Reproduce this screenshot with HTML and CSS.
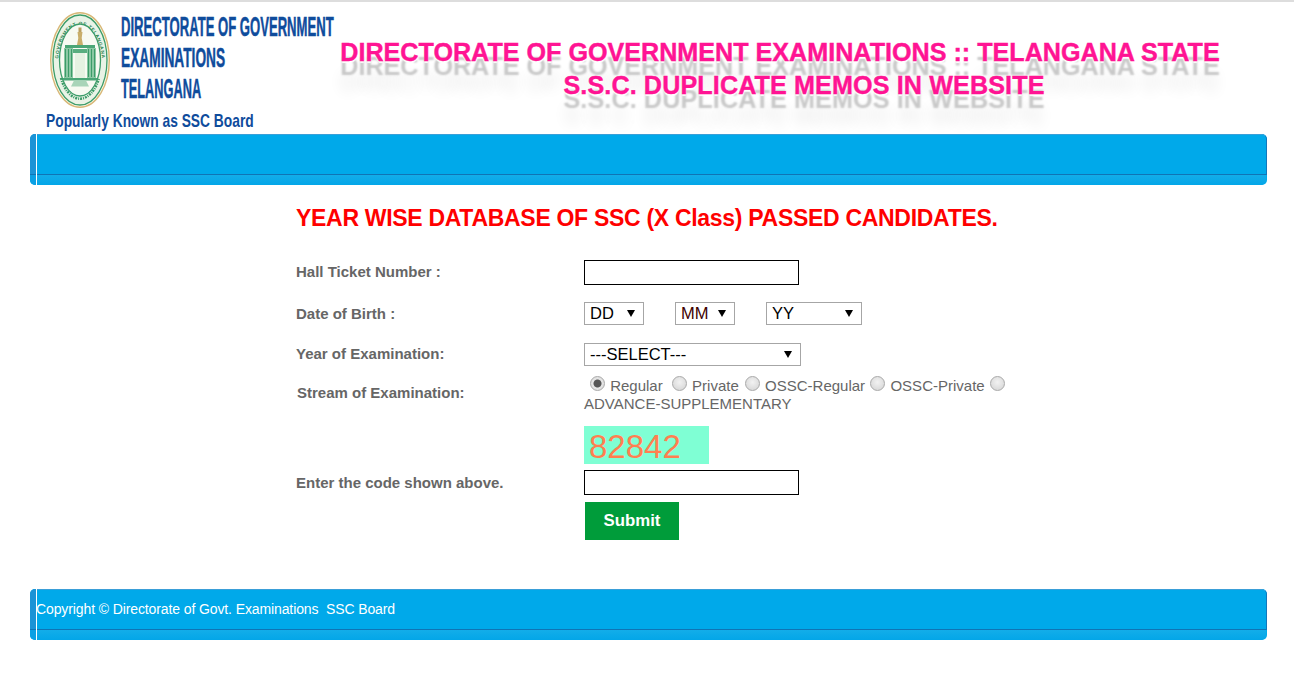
FILE: index.html
```html
<!DOCTYPE html>
<html lang="en">
<head>
<meta charset="utf-8">
<title>S.S.C. Duplicate Memos</title>
<link rel="stylesheet" href="styles.css">
</head>
<body>
<header class="header">
  <div class="logo">
    <div class="logo-top">
      <svg class="seal" viewBox="0 0 60 96" width="60" height="96" aria-hidden="true">
        <defs>
          <path id="sealArc" d="M8 52 A22 39 0 0 1 52 52"/>
        </defs>
        <ellipse cx="30" cy="48" rx="29.300" ry="47.300" fill="#fbf8ea" stroke="#d8b878" stroke-width="1.400"/>
        <ellipse cx="30" cy="48" rx="27" ry="45" fill="#e9f3e6" stroke="#3c9c69" stroke-width="1.300"/>
        <text class="seal-text" text-anchor="middle"><textPath href="#sealArc" startOffset="50%">GOVERNMENT OF TELANGANA</textPath></text>
        <path class="seal-script" d="M11 66 A21 36 0 0 0 49 66"/>
        <ellipse cx="30" cy="48" rx="20.500" ry="36" fill="#f7faf2" stroke="#3c9c69" stroke-width="1.300"/>
        <path d="M27.500 20h5l-.8 6 1.300 7h-6l1.300-7z" fill="#c9ae6a"/>
        <path d="M28.500 15.500h3v4.500h-3z" fill="#b89f60"/>
        <path d="M15 33h30v3H15z" fill="#4aa676"/>
        <path d="M14 36h9v30h-9zM37 36h9v30h-9z" fill="#8cc8a4"/>
        <path d="M15.500 37v28M18.500 37v28M21.500 37v28M38.500 37v28M41.500 37v28M44.500 37v28" stroke="#3c9c69" stroke-width="1"/>
        <path d="M23 37h14v4H23z" fill="#5aae80"/>
        <path d="M25 41h10v25H25z" fill="#e6f2e2"/>
        <path d="M13 66h34v2.500H13z" fill="#4aa676"/>
        <path d="M24 68.500h12l3 6H21z" fill="#a8d4b8"/>
      </svg>
      <div class="logo-lines">
        <div class="logo-line line-one">DIRECTORATE OF GOVERNMENT</div>
        <div class="logo-line line-two">EXAMINATIONS</div>
        <div class="logo-line line-three">TELANGANA</div>
      </div>
    </div>
    <div class="logo-sub">Popularly Known as SSC Board</div>
  </div>
  <h1 class="title">DIRECTORATE OF GOVERNMENT EXAMINATIONS :: TELANGANA STATE<br><span class="title-second">S.S.C. DUPLICATE MEMOS IN WEBSITE</span></h1>
</header>

<div class="bar">
  <div class="bar-cap"></div>
  <div class="bar-body">
    <div class="bar-main"></div>
    <div class="bar-strip"></div>
  </div>
</div>

<main class="content">
  <h2 class="heading">YEAR WISE DATABASE OF SSC (X Class) PASSED CANDIDATES.</h2>
  <form class="form">
    <div class="row row-hall">
      <label class="label">Hall Ticket Number :</label>
      <input class="field" type="text">
    </div>
    <div class="row row-dob">
      <span class="label">Date of Birth :</span>
      <div class="dob">
        <span class="pick pick-dd"><select><option>DD</option></select></span>
        <span class="pick pick-dd"><select class="dark"><option>MM</option></select></span>
        <span class="pick pick-yy"><select><option>YY</option></select></span>
      </div>
    </div>
    <div class="row row-year">
      <label class="label">Year of Examination:</label>
      <span class="pick pick-year"><select><option>---SELECT---</option></select></span>
    </div>
    <div class="row row-stream">
      <span class="label label-stream">Stream of Examination:</span>
      <div class="radios">
        <input type="radio" name="stream" class="first" checked> Regular
        <input type="radio" name="stream" class="second"> Private
        <input type="radio" name="stream" class="third"> OSSC-Regular
        <input type="radio" name="stream"> OSSC-Private
        <input type="radio" name="stream"> ADVANCE-SUPPLEMENTARY
      </div>
    </div>
    <div class="row row-captcha">
      <span></span>
      <div class="captcha">82842</div>
    </div>
    <div class="row row-code">
      <label class="label">Enter the code shown above.</label>
      <input class="field" type="text">
    </div>
    <div class="row row-submit">
      <span></span>
      <button class="submit" type="button">Submit</button>
    </div>
  </form>
</main>

<footer class="bar bar-footer">
  <div class="bar-cap"></div>
  <div class="bar-body">
    <div class="bar-main"><span class="copyright">Copyright © Directorate of Govt. Examinations&nbsp; SSC Board</span></div>
    <div class="bar-strip"></div>
  </div>
</footer>
</body>
</html>
```
FILE: styles.css
```css
* { box-sizing: border-box; }
html, body { margin: 0; padding: 0; height: 100%; overflow: hidden; }
body {
  background: #fff;
  font-family: "Liberation Sans", Arial, sans-serif;
  font-size: 14px;
  color: #666;
  border-top: 2px solid #ddd;
}

/* header */
.header { display: flex; height: 132px; }
.logo { width: 340px; flex: none; padding: 10px 0 0 46px; }
.logo-top { display: flex; height: 96px; }
.seal { margin-left: 4px; flex: none; }
.seal-text { font: bold 4.800px "Liberation Sans", sans-serif; fill: #1f7f50; letter-spacing: .55px; }
.seal-script { fill: none; stroke: #3c9c69; stroke-width: 2.500; stroke-dasharray: 2 1 1 1; }
.logo-lines { margin-left: 11px; width: 213px; display: flex; flex-direction: column; gap: 5px; padding-top: 2px; }
.logo-line {
  height: 26px;
  font: bold 27px/26px "Liberation Sans Narrow", "Liberation Sans", sans-serif;
  color: #0f4c9c;
  -webkit-text-stroke: .5px #0f4c9c;
  white-space: nowrap;
  transform-origin: left center;
}
.line-one { transform: scaleX(.485); }
.line-two { transform: scaleX(.508); }
.line-three { transform: scaleX(.473); }
.logo-sub {
  width: 208px;
  margin-top: 2px;
  font: bold 19px/22px "Liberation Sans Narrow", "Liberation Sans", sans-serif;
  color: #0f4c9c;
  white-space: nowrap;
  transform: scaleX(.726);
  transform-origin: left center;
}
.title {
  margin: 34px 0 0;
  width: 880px;
  font-size: 25.150px;
  line-height: 33px;
  font-weight: bold;
  text-align: center;
  white-space: nowrap;
  color: #ff1493;
  -webkit-text-stroke: .4px #ff1493;
  text-shadow: 0 2px 1px #fff, 0 14px 2px #c8c8c8, 0 30px 14px #ebebeb;
}
.title-second { margin-left: 48px; letter-spacing: .12px; }

/* blue bars */
.bar {
  display: flex;
  height: 51px;
  margin: 0 27px 0 30px;
  border-radius: 5px;
  overflow: hidden;
  background: #00a9ea;
}
.bar-cap {
  width: 7px;
  flex: none;
  background: linear-gradient(#1b93d6 0 40px, #0f74b5 40px 41px, #0aa0e4 41px);
  border-right: 1px solid #fff;
}
.bar-body { flex: 1; display: flex; flex-direction: column; }
.bar-main {
  height: 41px;
  display: flex;
  align-items: center;
  padding-bottom: 2px;
  background: #00a9ea;
  border-top: 1px solid #3a9fd8;
  border-right: 1px solid #1277bc;
  border-bottom: 1px solid #0f74b5;
  border-top-right-radius: 5px;
}
.bar-strip {
  flex: 1;
  margin-right: 1px;
  background: linear-gradient(#13ade9, #03a6e8);
  border-bottom-right-radius: 5px;
}
.bar-footer { margin-top: 49px; }
.copyright { margin-left: -1px; color: #fff; font-size: 14px; letter-spacing: -.11px; white-space: nowrap; }

/* content */
.content { padding-left: 296px; }
.heading {
  margin: 20px 0 0;
  font-size: 23px;
  letter-spacing: -.3px;
  line-height: 27px;
  font-weight: bold;
  color: #f00;
  white-space: nowrap;
}
.form { display: block; }
.row { display: grid; grid-template-columns: 288px 1fr; align-items: center; }
.label { font-weight: bold; font-size: 15px; color: #666; white-space: nowrap; }
.row-hall { margin-top: 28px; }
.row-hall .label { margin-top: -2px; }
.row-dob { margin-top: 17px; }
.row-year { margin-top: 18px; }
.row-year .label { margin-top: -2px; }
.row-stream { margin-top: 11px; align-items: start; }
.label-stream { margin: 7px 0 0 1px; }
.row-captcha { margin-top: 14px; }
.row-code { margin-top: 6px; }
.row-submit { margin-top: 7px; }

.field {
  display: block;
  width: 215px;
  height: 25px;
  border: 1px solid #000;
  border-radius: 0;
  background: #fff;
  padding: 0;
}
.dob { display: flex; gap: 31px; }
.pick { display: block; position: relative; height: 23px; }
.pick::after {
  content: "";
  position: absolute;
  top: 8px;
  right: 9px;
  border-left: 4px solid transparent;
  border-right: 4px solid transparent;
  border-top: 7px solid #000;
  pointer-events: none;
}
.pick select {
  display: block;
  width: 100%;
  height: 100%;
  appearance: none;
  -webkit-appearance: none;
  background: #fff;
  border: 1px solid #a6a6a6;
  border-radius: 0;
  padding: 0 0 1px 5px;
  font: 16.500px "Liberation Sans", sans-serif;
  color: #000;
}
.pick select.dark { color: #400000; }
.pick-dd { width: 60px; }
.pick-yy { width: 96px; }
.pick-year { width: 217px; }

.radios { width: 440px; margin-top: -1px; line-height: 18px; font-size: 15px; color: #666; height: 36px; }
.radios input {
  appearance: none;
  -webkit-appearance: none;
  width: 15px;
  height: 15px;
  margin: 0 1px 0 1px;
  vertical-align: 0;
  border: 1px solid #a9a9a9;
  border-radius: 50%;
  background: radial-gradient(circle at 50% 40%, #f2f2f2, #d2d2d2);
}
.radios input.first { margin-left: 6px; }
.radios input.second { margin-left: 5px; }
.radios input.third { margin-left: 2px; }
.radios input:checked { background: radial-gradient(circle, #555 0 3.500px, #e6e6e6 4.500px, #d6d6d6); }

.captcha {
  width: 125px;
  height: 38px;
  padding-left: 5px;
  background: #7fffd4;
  color: #ff7f50;
  font-size: 33px;
  line-height: 42px;
}
.submit {
  display: block;
  margin-left: 1px;
  width: 94px;
  height: 38px;
  border: 0;
  background: #009c3a;
  color: #fff;
  font: bold 16.800px "Liberation Sans", sans-serif;
  padding: 0;
}
```
